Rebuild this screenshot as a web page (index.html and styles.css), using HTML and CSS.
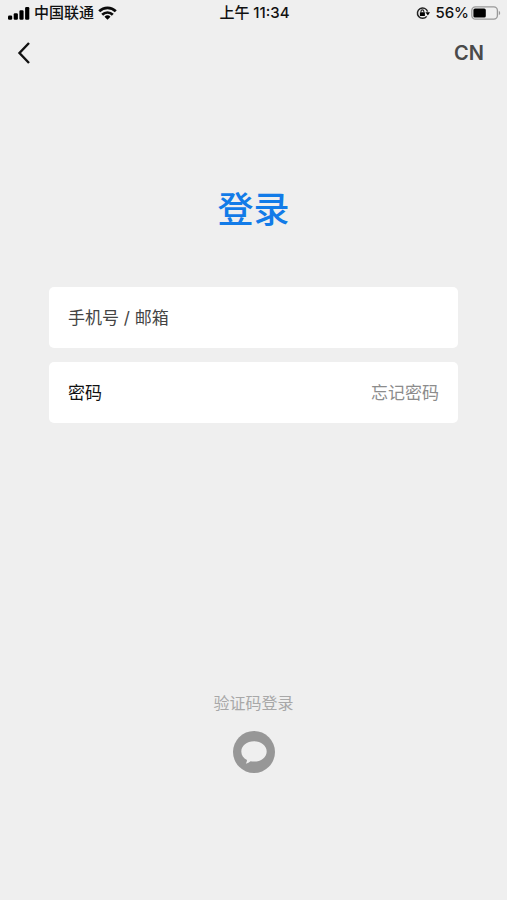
FILE: index.html
```html
<!DOCTYPE html>
<html lang="zh-CN">
<head>
<meta charset="utf-8">
<meta name="viewport" content="width=device-width, initial-scale=1">
<title>登录</title>
<link rel="stylesheet" href="styles.css">
</head>
<body>
<div class="screen">
  <div class="status">
    <div class="status-side">
      <svg class="signal" width="22" height="14" viewBox="0 0 22 14" aria-hidden="true">
        <rect x="0" y="9.500" width="4.200" height="4.200" rx="1.200"/>
        <rect x="5.700" y="7.300" width="4.200" height="6.400" rx="1.200"/>
        <rect x="11.400" y="4.300" width="4.200" height="9.400" rx="1.200"/>
        <rect x="17.100" y="1" width="4.200" height="12.700" rx="1.200"/>
      </svg>
      <span>中国联通</span>
      <svg width="19" height="14" viewBox="0 0 19 14" aria-hidden="true">
        <path d="M1.200 5.200a11.800 11.800 0 0 1 16.600 0M4.200 8.700a7.500 7.500 0 0 1 10.600 0" fill="none" stroke="#0b0b0b" stroke-width="2.700"/>
        <path d="M9.500 13.700 6.500 10.800a4.300 4.300 0 0 1 6 0z"/>
      </svg>
    </div>
    <span class="time">上午 11:34</span>
    <div class="status-side status-right">
      <svg class="lock" width="14" height="14" viewBox="0 0 14 14" aria-hidden="true">
        <path d="M10.700 10.400A5.200 5.200 0 1 1 11.600 5.600" fill="none" stroke="#222" stroke-width="1.500"/>
        <path d="M9.400 6.200h4.600l-2.100 3.300z"/>
        <rect x="3.900" y="6.200" width="5" height="3.700" rx=".5"/>
        <path d="M5 6.500V5.300a1.400 1.400 0 0 1 2.800 0v1.200" fill="none" stroke="#222" stroke-width="1.100"/>
      </svg>
      <span>56%</span>
      <svg class="battery" width="30" height="14" viewBox="0 0 30 14" aria-hidden="true">
        <rect x=".8" y=".8" width="25.600" height="12.400" rx="3.600" fill="none" stroke="#999" stroke-width="1.300"/>
        <rect x="2.400" y="2.400" width="12.400" height="9.200" rx="1.600" fill="#000"/>
        <path d="M27.800 4.800c1.900.8 1.900 3.600 0 4.400z" fill="#999"/>
      </svg>
    </div>
  </div>

  <header class="nav">
    <button class="back" type="button" aria-label="返回">
      <svg width="14" height="24" viewBox="0 0 14 24" aria-hidden="true">
        <path d="M13 2 3.500 12l9.500 10" fill="none" stroke="#111" stroke-width="2.400"/>
      </svg>
    </button>
    <button class="lang" type="button">CN</button>
  </header>

  <main class="content">
    <h1 class="title">登录</h1>
    <form class="form">
      <div class="field">
        <input class="input" type="text" placeholder="手机号 / 邮箱" aria-label="手机号 / 邮箱">
      </div>
      <div class="field">
        <input class="input input-password" type="password" placeholder="密码" aria-label="密码">
        <a class="forgot" href="#">忘记密码</a>
      </div>
    </form>
  </main>

  <footer class="other">
    <a class="code-login" href="#">验证码登录</a>
    <button class="chat" type="button" aria-label="验证码登录">
      <svg width="42" height="42" viewBox="0 0 42 42" aria-hidden="true">
        <circle cx="21" cy="21" r="21" fill="#979797"/>
        <path d="M21 10.200c-7.100 0-12.700 4.500-12.700 10.200 0 3.700 2.200 6.900 5.700 8.700 0 1.300-.4 2.300-1.200 3.600 1.900-.4 3.500-1.200 4.800-2.400 1.100.2 2.200.3 3.400.3 7.100 0 12.700-4.500 12.700-10.200S28.100 10.200 21 10.200z" fill="#efefef"/>
      </svg>
    </button>
  </footer>
</div>
</body>
</html>
```
FILE: styles.css
```css
* {
  box-sizing: border-box;
}

body {
  margin: 0;
  background: #efefef;
  color: #111;
  font-family: Inter, "Noto Sans CJK SC", sans-serif;
}

button {
  border: 0;
  padding: 0;
  background: none;
  font: inherit;
  cursor: pointer;
}

a {
  text-decoration: none;
}

svg {
  display: block;
  flex: none;
}

.screen {
  display: flex;
  flex-direction: column;
  min-height: 100vh;
}

.status {
  display: grid;
  grid-template-columns: 1fr auto 1fr;
  align-items: center;
  height: 26px;
  padding: 0 6px 0 8px;
  font-size: 15px;
  font-weight: 500;
  line-height: 20px;
  white-space: nowrap;
}

.status-side {
  display: flex;
  align-items: center;
  gap: 4px;
}

.status-right {
  justify-content: flex-end;
  gap: 2px;
}

.lock {
  margin-right: 3px;
}

.nav {
  display: flex;
  align-items: center;
  justify-content: space-between;
  height: 54px;
  padding: 0 23px 0 16px;
}

.lang {
  color: #4a4a4a;
  font-size: 20px;
  font-weight: 600;
  line-height: 24px;
}

.content {
  padding: 103px 49px 0;
}

.title {
  margin: 0 0 50px;
  color: #127be8;
  font-size: 36px;
  font-weight: 500;
  line-height: 54px;
  text-align: center;
}

.form {
  display: flex;
  flex-direction: column;
  gap: 14px;
}

.field {
  display: flex;
  align-items: center;
  height: 61px;
  padding: 0 19px;
  border-radius: 5px;
  background: #fff;
}

.input {
  flex: 1;
  min-width: 0;
  padding: 0;
  border: 0;
  outline: 0;
  background: none;
  color: #111;
  font: inherit;
  font-size: 17px;
  line-height: 26px;
}

.input::placeholder {
  color: #444;
  opacity: 1;
}

.input-password::placeholder {
  color: #111;
}

.forgot {
  color: #8c8c8c;
  font-size: 17px;
  line-height: 26px;
}

.other {
  display: flex;
  flex-direction: column;
  align-items: center;
  gap: 16px;
  margin-top: auto;
  padding-bottom: 127px;
}

.code-login {
  color: #a8a8a8;
  font-size: 16px;
  line-height: 24px;
}
```
